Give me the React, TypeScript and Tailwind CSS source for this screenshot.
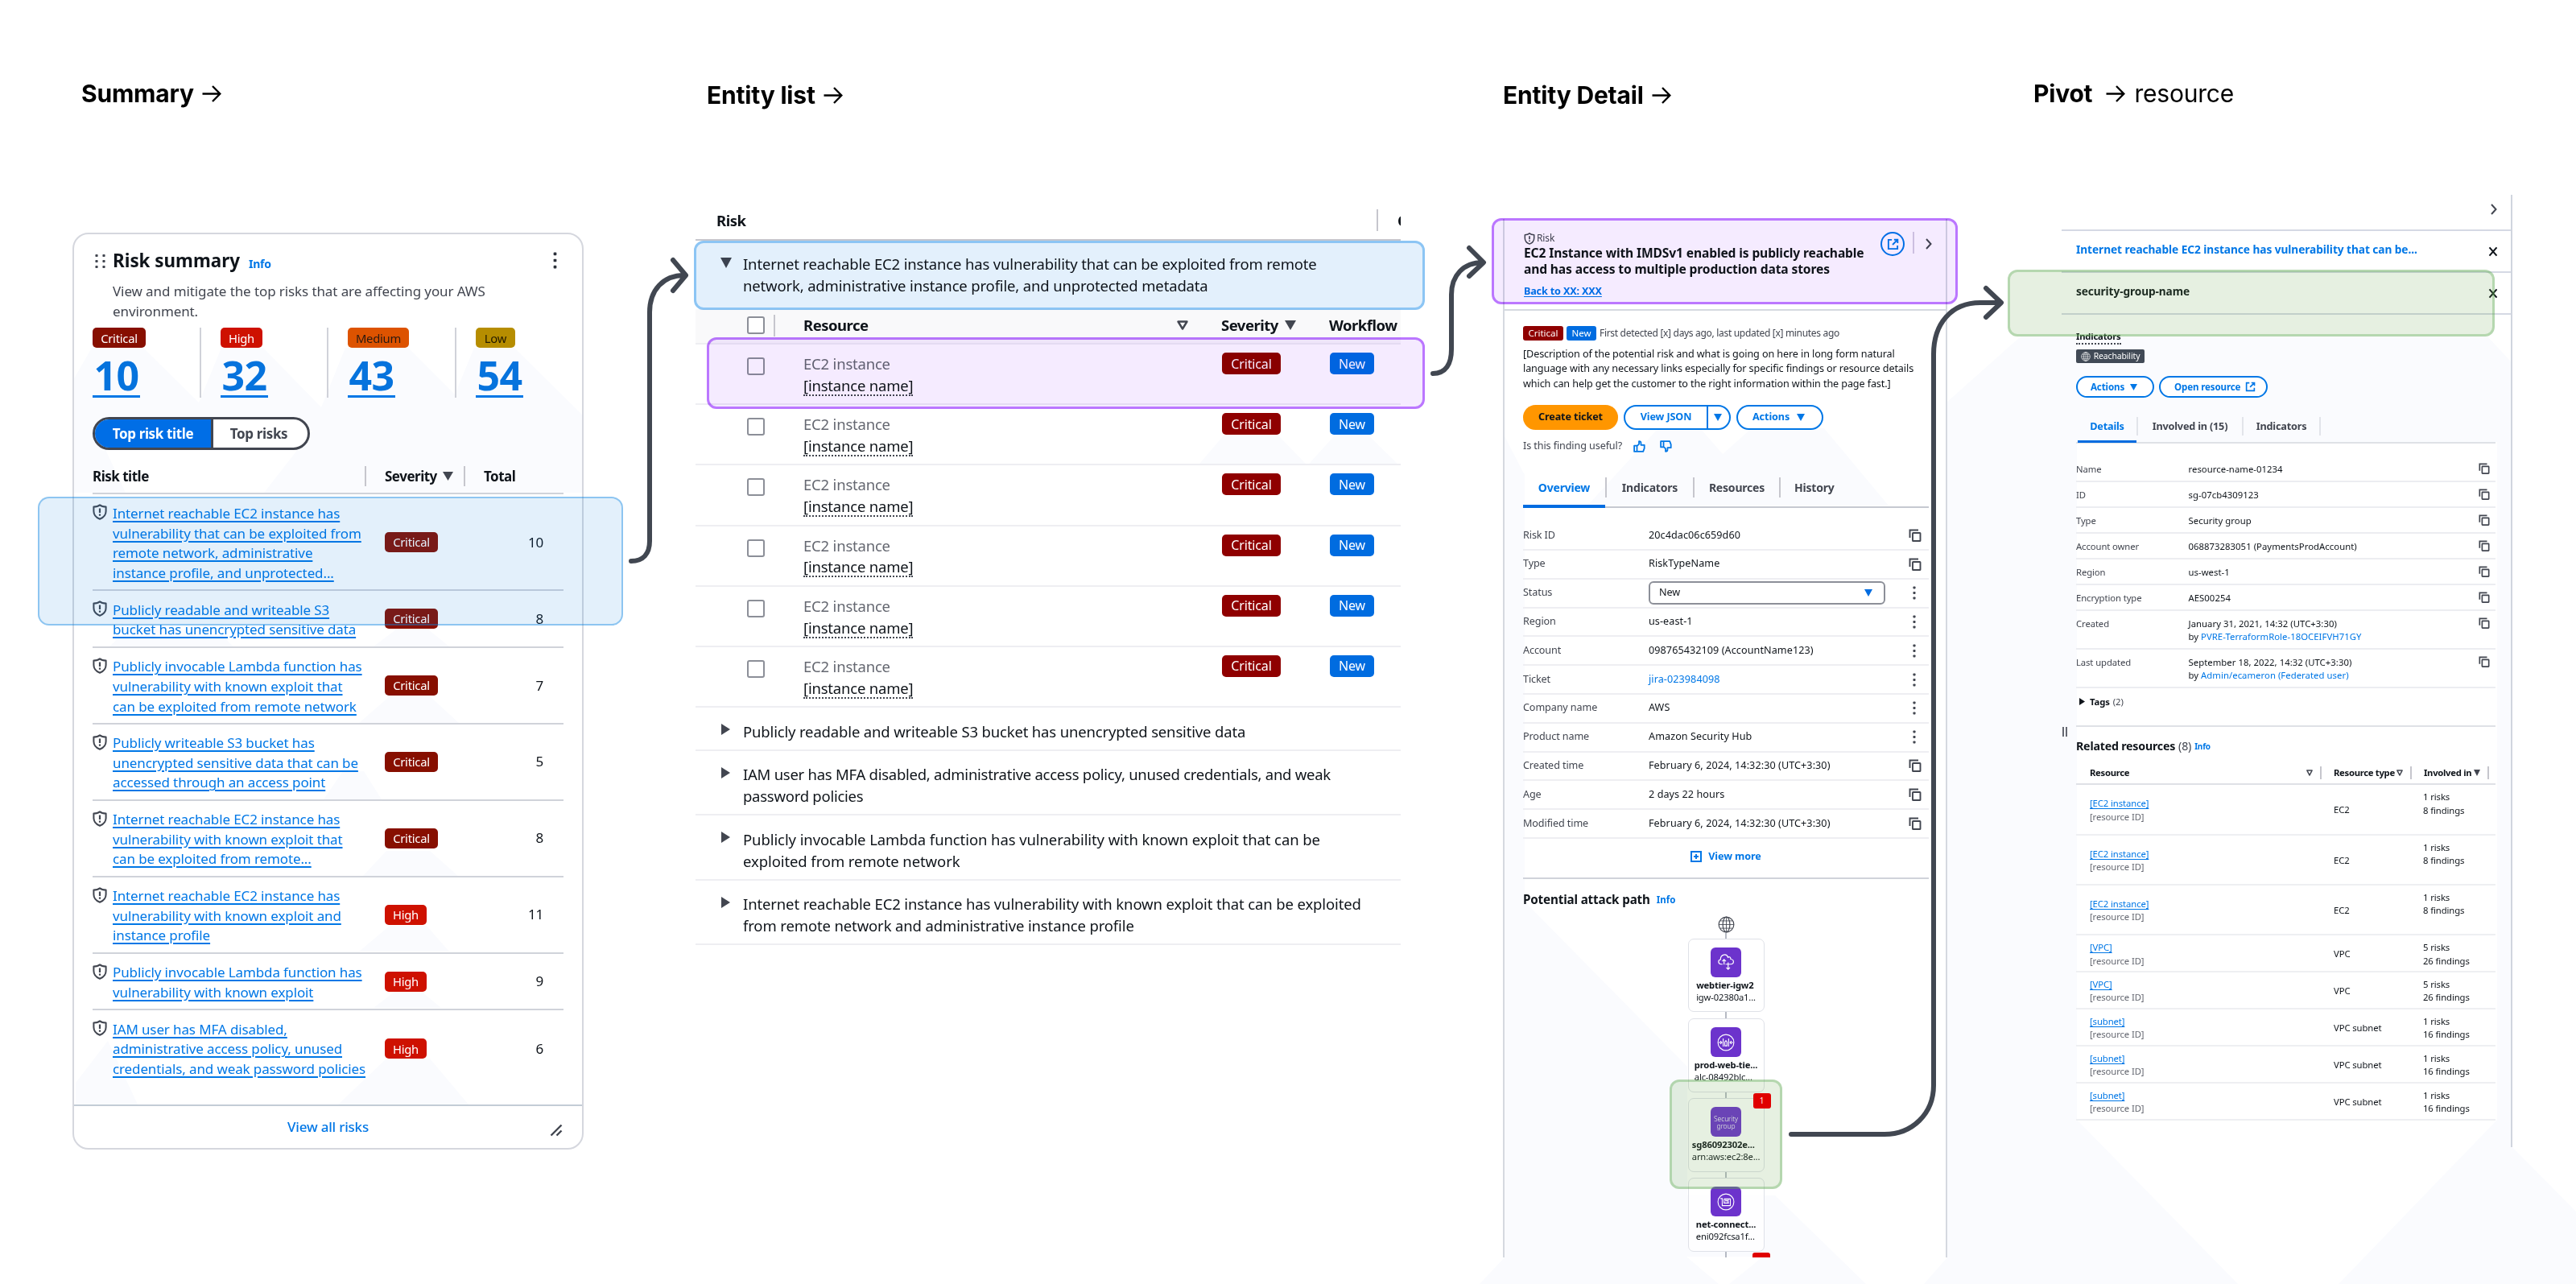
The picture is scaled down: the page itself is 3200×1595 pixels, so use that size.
import React, { Fragment, type ReactNode } from "react";

/* ---------- icons ---------- */

function Down({ className = "" }: { className?: string }) {
  return (
    <svg viewBox="0 0 12 10" preserveAspectRatio="none" className={className} fill="currentColor">
      <path d="M0 0h12L6 10z" />
    </svg>
  );
}

function DownOutline({ className = "" }: { className?: string }) {
  return (
    <svg viewBox="0 0 14 12" preserveAspectRatio="none" className={className} fill="none" stroke="currentColor" strokeWidth="2.4" strokeLinejoin="round">
      <path d="M1.5 1.5h11L7 10.5z" />
    </svg>
  );
}

function Right({ className = "" }: { className?: string }) {
  return (
    <svg viewBox="0 0 10 12" preserveAspectRatio="none" className={className} fill="currentColor">
      <path d="M0 0l10 6L0 12z" />
    </svg>
  );
}

function Shield({ className = "" }: { className?: string }) {
  return (
    <svg viewBox="0 0 18 20" className={className} fill="none" stroke="currentColor" strokeWidth="2">
      <path d="M9 1.2C7 3 4 3.6 1.4 3.6V9c0 4.8 3 8 7.6 9.8 4.6-1.8 7.6-5 7.6-9.800V3.600C14 3.600 11 3 9 1.200z" strokeLinejoin="round" />
      <path d="M9 5.500v5.500M9 12.500v2.200" strokeWidth="2.200" />
    </svg>
  );
}

function Copy({ className = "" }: { className?: string }) {
  return (
    <svg viewBox="0 0 16 16" className={className} fill="none" stroke="currentColor" strokeWidth="1.9">
      <path d="M1.500 11V1.500H12" />
      <rect x="5" y="5" width="9.500" height="10" rx=".6" />
    </svg>
  );
}

function External({ className = "" }: { className?: string }) {
  return (
    <svg viewBox="0 0 16 16" className={className} fill="none" stroke="currentColor" strokeWidth="2">
      <path d="M6.500 2H2v12h12V9.500M9.500 1.800h4.700v4.700M14 2L7.500 8.500" />
    </svg>
  );
}

function Thumb({ className = "" }: { className?: string }) {
  return (
    <svg viewBox="0 0 16 16" className={className} fill="none" stroke="currentColor" strokeWidth="1.9" strokeLinejoin="round">
      <path d="M1.200 7h3.600v7.800H1.200zM4.800 7.500L7.500 5V1.300c1.800 0 2.600 1 2.600 2.500V6.200h4.500v4.300l-1.600 4.300H4.800" />
    </svg>
  );
}

function Globe({ className = "" }: { className?: string }) {
  return (
    <svg viewBox="0 0 22 22" className={className} fill="none" stroke="currentColor" strokeWidth="1.200">
      <circle cx="11" cy="11" r="9.800" />
      <ellipse cx="11" cy="11" rx="4.600" ry="9.800" />
      <path d="M11 1.200v19.600M1.200 11h19.600M3 6.200h16M3 15.800h16" strokeWidth=".9" />
    </svg>
  );
}

function Chevron({ className = "" }: { className?: string }) {
  return (
    <svg viewBox="0 0 8 14" className={className} fill="none" stroke="currentColor" strokeWidth="2">
      <path d="M1 1l5.500 6L1 13" />
    </svg>
  );
}

function Cross({ className = "" }: { className?: string }) {
  return (
    <svg viewBox="0 0 12 14" preserveAspectRatio="none" className={className} fill="none" stroke="currentColor" strokeWidth="2">
      <path d="M1.500 1.500l9 11M10.500 1.500l-9 11" />
    </svg>
  );
}

function Dots({ className = "" }: { className?: string }) {
  return (
    <svg viewBox="0 0 4 18" className={className} fill="currentColor">
      <rect x=".4" y=".4" width="3.200" height="3.200" rx=".8" />
      <rect x=".4" y="7.400" width="3.200" height="3.200" rx=".8" />
      <rect x=".4" y="14.400" width="3.200" height="3.200" rx=".8" />
    </svg>
  );
}

/* ---------- shared ---------- */

function Title({ children, rest, gap, className = "" }: { children: ReactNode; rest?: string; gap: string; className?: string }) {
  return (
    <h2 className={`flex h-10 items-center font-['Inter',sans-serif] text-[30px] leading-10 font-bold tracking-[-0.2px] whitespace-nowrap text-black ${className}`}>
      {children}
      <svg viewBox="0 0 24 26" className={`h-[26px] w-6 ${gap}`} fill="none" stroke="currentColor" strokeWidth="2.400">
        <path d="M.5 13.500h21.500M13 4l9.300 9.500L13 23" />
      </svg>
      {rest && <span className="ml-[11px] font-normal">{rest}</span>}
    </h2>
  );
}

/* ---------- summary ---------- */

const severities = [
  { label: "Critical", count: 10, box: "w-[159px]", badge: "w-[66px] bg-[#870f00] text-white" },
  { label: "High", count: 32, box: "w-[158px]", badge: "w-[52px] bg-[#ce1100] text-white" },
  { label: "Medium", count: 43, box: "w-[159px]", badge: "w-[76px] bg-[#dd5300] text-[#2a1a10]" },
  { label: "Low", count: 54, box: "w-[80px]", badge: "w-[49px] bg-[#b68d00] text-[#221a00]" },
];

const risks: { lines: string[]; level: "Critical" | "High"; total: number; h: string }[] = [
  { lines: ["Internet reachable EC2 instance has", "vulnerability that can be exploited from", "remote network, administrative", "instance profile, and unprotected..."], level: "Critical", total: 10, h: "h-[119.7px]" },
  { lines: ["Publicly readable and writeable S3", "bucket has unencrypted sensitive data"], level: "Critical", total: 8, h: "h-[70.8px]" },
  { lines: ["Publicly invocable Lambda function has", "vulnerability with known exploit that", "can be exploited from remote network"], level: "Critical", total: 7, h: "h-[94.9px]" },
  { lines: ["Publicly writeable S3 bucket has", "unencrypted sensitive data that can be", "accessed through an access point"], level: "Critical", total: 5, h: "h-[94.8px]" },
  { lines: ["Internet reachable EC2 instance has", "vulnerability with known exploit that", "can be exploited from remote..."], level: "Critical", total: 8, h: "h-[95px]" },
  { lines: ["Internet reachable EC2 instance has", "vulnerability with known exploit and", "instance profile"], level: "High", total: 11, h: "h-[95.2px]" },
  { lines: ["Publicly invocable Lambda function has", "vulnerability with known exploit"], level: "High", total: 9, h: "h-[70.6px]" },
  { lines: ["IAM user has MFA disabled,", "administrative access policy, unused", "credentials, and weak password policies"], level: "High", total: 6, h: "h-[95px]" },
];

function Summary() {
  return (
    <section className="w-[864px] shrink-0 pt-[96px]">
      <Title className="ml-[101px]" gap="ml-[10px]">Summary</Title>
      <div className="mt-[153px] ml-[90px] flex h-[1139px] w-[635px] flex-col rounded-[20px] border-2 border-[#d5d7de] text-[17px] tracking-[-0.24px]">
        <div className="flex h-[43px] items-end pl-[26px]">
          <div className="mb-[-4px] flex items-center">
            <div className="flex gap-[5px] text-[#424650]">
              <Dots className="h-[19px] w-1" />
              <Dots className="h-[19px] w-1" />
            </div>
            <h3 className="ml-[9px] text-[22.400px] leading-7 font-bold tracking-normal text-[#0f141a]">Risk summary</h3>
            <span className="mt-[7px] ml-[11px] text-[14px] leading-5 font-bold text-[#0077e6]">Info</span>
          </div>
          <Dots className="mb-0 ml-auto mr-[31px] h-[21px] w-[5px] text-[#2b303a]" />
        </div>
        <p className="mt-[16px] ml-12 text-[17px] leading-[24.700px] tracking-[-0.1px] text-[#424650]">
          View and mitigate the top risks that are affecting your AWS
          <br />
          environment.
        </p>
        <div className="mt-[8px] ml-[23px] flex h-[87px]">
          {severities.map((s, i) => (
            <div key={s.label} className={`relative ${s.box}`}>
              <span className={`flex h-[25px] items-center justify-center rounded-[5px] text-[14.800px] ${s.badge}`}>{s.label}</span>
              <a className="mt-[9px] block h-[53px] w-[59px] border-b-[3px] border-[#0077e6] text-center text-[50px] leading-[50px] font-bold tracking-[-0.5px] text-[#0673dd]">{s.count}</a>
              {i < 3 && <i className="absolute top-0 right-6 h-[87px] w-0.5 bg-[#d0d2d9]" />}
            </div>
          ))}
        </div>
        <div className="mt-6 ml-[23px] flex h-[41px] w-[270px] overflow-hidden rounded-[21px] border-[3px] border-[#424650] bg-white font-bold">
          <span className="flex w-[147px] items-center justify-center border-r-[3px] border-[#424650] bg-[#006ee6] text-white tracking-[-0.35px]">Top risk title</span>
          <span className="flex flex-1 items-center justify-center pr-1 text-[#424650] tracking-[-0.35px]">Top risks</span>
        </div>
        <div className="mt-[12px] ml-[23px] flex h-[43px] w-[585px] items-center border-b-2 border-[#d0d3da] font-bold tracking-[-0.500px] text-[#0f141a]">
          <span className="w-[338px]">Risk title</span>
          <i className="h-[25px] w-0.5 bg-[#c6c6cd]" />
          <span className="ml-[23px] w-[72px]">Severity</span>
          <Down className="h-[11px] w-[13px] text-[#424650]" />
          <i className="ml-[13px] h-[25px] w-0.5 bg-[#c6c6cd]" />
          <span className="ml-[23px]">Total</span>
        </div>
        <ul className="ml-[23px] w-[585px]">
          {risks.map((r, i) => (
            <li key={i} className={`flex border-[#d0d3da] ${r.h} ${i < 7 ? "border-b-2" : ""}`}>
              <Shield className="mt-3 h-5 w-[18px] text-[#424650]" />
              <div className="mt-[11.500px] ml-[7px] w-[338px] leading-[24.600px] tracking-[-0.12px] whitespace-nowrap text-[#0077e6] underline decoration-2 underline-offset-[3px]">
                {r.lines.map((l, k) => (
                  <Fragment key={k}>
                    {l}
                    <br />
                  </Fragment>
                ))}
              </div>
              <div className="flex w-[197px] items-center justify-between">
                <span className={`flex h-[25px] items-center justify-center rounded-[5px] text-[14.800px] text-white ${r.level === "Critical" ? "w-[66px] bg-[#870f00]" : "w-[52px] bg-[#ce1100]"}`}>{r.level}</span>
                <span className="text-[#0f141a]">{r.total}</span>
              </div>
            </li>
          ))}
        </ul>
        <div className="relative mt-auto flex h-[54px] items-center justify-center border-t-2 border-[#c3ccd6] text-[17px] font-medium tracking-[-0.2px] text-[#0077e6]">
          View all risks
          <svg viewBox="0 0 16 16" className="absolute right-6 bottom-[14px] h-4 w-4 text-[#424650]" fill="none" stroke="currentColor" strokeWidth="2.400">
            <path d="M1.500 14.500l13-13M8.500 14.500l6-6" />
          </svg>
        </div>
      </div>
    </section>
  );
}

/* ---------- entity list ---------- */

const groups: { h: string; lines: string[]; track: string }[] = [
  { h: "h-[53.700px]", track: "tracking-[-0.16px]", lines: ["Publicly readable and writeable S3 bucket has unencrypted sensitive data"] },
  { h: "h-[80.600px]", track: "tracking-[-0.26px]", lines: ["IAM user has MFA disabled, administrative access policy, unused credentials, and weak", "password policies"] },
  { h: "h-[80.400px]", track: "tracking-[-0.09px]", lines: ["Publicly invocable Lambda function has vulnerability with known exploit that can be", "exploited from remote network"] },
  { h: "h-[80.600px]", track: "tracking-[-0.13px]", lines: ["Internet reachable EC2 instance has vulnerability with known exploit that can be exploited", "from remote network and administrative instance profile"] },
];

function Box({ className = "" }: { className?: string }) {
  return <span className={`block h-[22px] w-[22px] rounded-[3px] border-[2.500px] border-[#8c8f98] bg-white ${className}`} />;
}

function EntityList() {
  return (
    <section className="w-[1003px] shrink-0 pt-[98px]">
      <Title className="ml-[14px]" gap="ml-[10px]">Entity list</Title>
      <div className="mt-[112px] w-[876px] overflow-hidden text-[18.500px] tracking-[-0.16px] text-[#0f141a]">
        <div className="flex h-[49px] items-center border-b-2 border-[#c6c6cd] pl-[26px] font-bold tracking-[-0.5px]">
          <span>Risk</span>
          <i className="ml-auto h-[27px] w-0.5 bg-[#c6c6cd]" />
          <span className="ml-[24px] w-[4px] overflow-hidden">C</span>
        </div>
        <div className="flex h-[85px] pt-[15px]">
          <Down className="mt-[6px] ml-[31px] h-[13px] w-[14px] text-[#424650]" />
          <p className="ml-[14px] leading-[27.400px] whitespace-nowrap">
            Internet reachable EC2 instance has vulnerability that can be exploited from remote
            <br />
            network, administrative instance profile, and unprotected metadata
          </p>
        </div>
        <div className="flex h-[44px] items-center border-b-2 border-[#eeeef2] bg-[#f9f9fa] pb-[2px] font-bold tracking-[-0.5px]">
          <Box className="ml-[64px]" />
          <i className="ml-[11px] h-[27px] w-0.5 bg-[#c6c6cd]" />
          <span className="ml-[35px] w-[464px]">Resource</span>
          <DownOutline className="h-3 w-[14px] text-[#424650]" />
          <span className="ml-[41px] w-[79px]">Severity</span>
          <Down className="h-3 w-[14px] text-[#424650]" />
          <span className="ml-[41px]">Workflow</span>
        </div>
        {[0, 1, 2, 3, 4, 5].map((i) => (
          <div key={i} className="flex h-[75.200px] border-b-2 border-[#eeeef2]">
            <Box className="mt-[16px] ml-[64px]" />
            <div className="mt-[11px] ml-12 w-[520px] leading-[26.800px] tracking-[-0.2px]">
              <div className="text-[#656871]">EC2 instance</div>
              <span className="inline-block h-[26px] border-b-2 border-dotted border-[#424650]">[instance name]</span>
            </div>
            <span className="mt-[10px] flex h-[27px] w-[73px] items-center justify-center rounded-[5px] bg-[#8f0000] text-[16px] text-white">Critical</span>
            <span className="mt-[10px] ml-[61px] flex h-[27px] w-[55px] items-center justify-center rounded-[5px] bg-[#006ce0] text-[16px] text-white">New</span>
          </div>
        ))}
        {groups.map((g) => (
          <div key={g.lines[0]} className={`flex border-b-2 border-[#eeeef2] ${g.h}`}>
            <Right className="mt-[20px] ml-8 h-[14px] w-[11px] text-[#424650]" />
            <p className={`mt-[15.500px] ml-4 leading-[27px] whitespace-nowrap ${g.track}`}>
              {g.lines.map((l, k) => (
                <Fragment key={k}>
                  {l}
                  <br />
                </Fragment>
              ))}
            </p>
          </div>
        ))}
      </div>
    </section>
  );
}

/* ---------- entity detail ---------- */

const detailRows: [string, string, "copy" | "dots"][] = [
  ["Risk ID", "20c4dac06c659d60", "copy"],
  ["Type", "RiskTypeName", "copy"],
  ["Status", "New", "dots"],
  ["Region", "us-east-1", "dots"],
  ["Account", "098765432109 (AccountName123)", "dots"],
  ["Ticket", "jira-023984098", "dots"],
  ["Company name", "AWS", "dots"],
  ["Product name", "Amazon Security Hub", "dots"],
  ["Created time", "February 6, 2024, 14:32:30 (UTC+3:30)", "copy"],
  ["Age", "2 days 22 hours", "copy"],
  ["Modified time", "February 6, 2024, 14:32:30 (UTC+3:30)", "copy"],
];

const nodes: { name: string; id: string; icon: ReactNode }[] = [
  {
    name: "webtier-igw2",
    id: "igw-02380a1...",
    icon: (
      <svg viewBox="0 0 24 24" className="h-[22px] w-[22px]" fill="none" stroke="white" strokeWidth="1.300">
        <path d="M7.500 15H5.500C.8 14.500 1.200 9 4.700 8.700 4.500 1.500 13 0 14.800 5.700c2-1.600 3.800 0 3.700 2.500 5 .6 5 6.300 0 6.800h-2M9.500 15.500V9M7 11l2.500-2.500L12 11M15 12.500v9.500M12.500 19.500l2.500 2.500 2.500-2.500M11.500 15h7" />
      </svg>
    ),
  },
  {
    name: "prod-web-tie...",
    id: "alc-08492blc...",
    icon: (
      <svg viewBox="0 0 24 24" className="h-[22px] w-[22px]" fill="none" stroke="white" strokeWidth="1.200">
        <circle cx="12" cy="12" r="10.800" />
        <path d="M2 12h4M18 12h4M4.500 10l2 2-2 2M19.500 10l-2 2 2 2M8.300 6.500v11M15.700 6.500v11M10.500 16.500v-5l1.500-2 1.500 2v5z" />
      </svg>
    ),
  },
  {
    name: "sg86092302e...",
    id: "arn:aws:ec2:8e...",
    icon: <span className="text-center text-[8.500px] leading-[9px] font-light tracking-[-0.1px] text-white">Security<br />group</span>,
  },
  {
    name: "net-connect...",
    id: "eni092fcsa1f...",
    icon: (
      <svg viewBox="0 0 24 24" className="h-[22px] w-[22px]" fill="none" stroke="white" strokeWidth="1.200">
        <circle cx="12" cy="12" r="10.800" />
        <path d="M4.500 7.500h2.500V17h11V8h-8.500M9.500 8v5.500h6.500M11 10.500h4M12 8v3M15 8v5" />
      </svg>
    ),
  },
];

function Detail() {
  return (
    <section className="w-[662px] shrink-0 pt-[98px]">
      <Title gap="ml-[10px]">Entity Detail</Title>
      <div className="mt-[134px] h-[1290px] w-[552px] overflow-hidden border-x-2 border-[#d5d9e0] text-[12.600px] tracking-[-0.1px] text-[#0f141a]">
        <header className="flex h-[114px] border-b-2 border-[#d5d9e0] pt-[16px] pl-6">
          <div className="w-[443px]">
            <div className="flex h-4 items-center gap-0.5 text-[12px] text-[#424650]">
              <Shield className="h-[15px] w-[14px]" />
              <span>Risk</span>
            </div>
            <h3 className="text-[15.600px] leading-[20.300px] font-bold tracking-[-0.13px] whitespace-nowrap">
              EC2 Instance with IMDSv1 enabled is publicly reachable
              <br />
              and has access to multiple production data stores
            </h3>
            <a className="mt-[8px] block text-[12.600px] leading-[18px] font-bold tracking-[-0.15px] text-[#0077e6] underline underline-offset-2">Back to XX: XXX</a>
          </div>
          <span className="flex h-[30px] w-[30px] items-center justify-center rounded-full border-2 border-[#0077e6] text-[#0077e6]">
            <External className="h-[15px] w-[15px]" />
          </span>
          <i className="ml-[10px] h-[27px] w-0.5 bg-[#d5cfe0]" />
          <Chevron className="mt-2 ml-[14px] h-[14px] w-2 text-[#424650]" />
        </header>
        <div className="pl-[23px]">
          <div className="mt-[19px] flex h-[18px] items-center text-[12px] tracking-[-0.31px] text-[#424650]">
            <span className="flex h-[18px] w-[50px] items-center justify-center rounded-[3px] bg-[#8f0000] tracking-normal text-[11.500px] text-white">Critical</span>
            <span className="ml-1 flex h-[18px] w-[37px] items-center justify-center rounded-[3px] bg-[#006ce0] tracking-normal text-[11.500px] text-white">New</span>
            <span className="ml-1">First detected [x] days ago, last updated [x] minutes ago</span>
          </div>
          <p className="mt-[8px] text-[12.600px] leading-[18.400px] whitespace-nowrap">
            [Description of the potential risk and what is going on here in long form natural
            <br />
            language with any necessary links especially for specific findings or resource details
            <br />
            which can help get the customer to the right information within the page fast.]
          </p>
          <div className="mt-[17px] flex h-[31px] gap-[7px] font-bold">
            <span className="flex w-[118px] items-center justify-center rounded-full bg-[#ff9600]">Create ticket</span>
            <span className="flex w-[133px] rounded-full border-2 border-[#0077e6] bg-white text-[#0077e6]">
              <span className="flex w-[103px] items-center justify-center border-r-2 border-[#0077e6]">View JSON</span>
              <Down className="mt-[9px] ml-[7px] h-[9px] w-[10px]" />
            </span>
            <span className="flex w-[108px] items-center rounded-full border-2 border-[#0077e6] bg-white pl-[18px] text-[#0077e6]">
              Actions
              <Down className="ml-[9px] h-[9px] w-[10px]" />
            </span>
          </div>
          <div className="mt-[10px] flex h-5 items-center text-[#424650]">
            <span className="w-[137px]">Is this finding useful?</span>
            <Thumb className="h-[15px] w-[15px] text-[#0077e6]" />
            <Thumb className="ml-[18px] h-[15px] w-[15px] -scale-y-100 text-[#0077e6]" />
          </div>
          <nav className="mt-[25px] flex h-[42px] w-[504px] items-start border-b-2 border-[#c6c9d1] text-[14px] leading-[33px] font-bold tracking-[-0.2px] text-[#424650]">
            <span className="flex h-[42px] w-[102px] justify-center border-b-4 border-[#006ce0] text-[#0077e6]">Overview</span>
            <i className="mt-[4px] h-[25px] w-0.5 bg-[#c6c6cd]" />
            <span className="w-[107px] text-center">Indicators</span>
            <i className="mt-[4px] h-[25px] w-0.5 bg-[#c6c6cd]" />
            <span className="w-[105px] text-center">Resources</span>
            <i className="mt-[4px] h-[25px] w-0.5 bg-[#c6c6cd]" />
            <span className="ml-[17px]">History</span>
          </nav>
          <dl className="mt-[17px] w-[504px]">
            {detailRows.map(([k, v, action]) => (
              <div key={k} className="flex h-[35.800px] items-center border-b-2 border-[#eeeef2]">
                <dt className="w-[156px] text-[#424650]">{k}</dt>
                {k === "Status" ? (
                  <dd className="flex h-[29px] w-[294px] items-center justify-between rounded-md border-2 border-[#8c8f98] bg-white pr-[14px] pl-[11px]">
                    New
                    <Down className="h-[9px] w-[10px] text-[#006ce0]" />
                  </dd>
                ) : (
                  <dd className={`w-[294px] tracking-[0.08px] whitespace-nowrap ${k === "Ticket" ? "text-[#0077e6]" : ""}`}>{v}</dd>
                )}
                {action === "copy" ? <Copy className="ml-[29px] h-4 w-4 text-[#424650]" /> : <Dots className="ml-[34px] h-[17px] w-1 text-[#424650]" />}
              </div>
            ))}
          </dl>
          <div className="flex h-[50px] w-[504px] items-center justify-center border-b-2 border-[#d0d3da] pb-[4px] font-bold text-[#0077e6]">
            <svg viewBox="0 0 14 14" className="mr-2 h-[14px] w-[14px]" fill="none" stroke="currentColor" strokeWidth="2">
              <path d="M1 1h12v12H1zM7 4v6M4 7h6" />
            </svg>
            View more
          </div>
          <h4 className="mt-[12px] flex items-center text-[15.200px] leading-6 font-bold tracking-[-0.15px]">
            Potential attack path <span className="mt-0.5 ml-2 text-[11.500px] tracking-normal text-[#0077e6]">Info</span>
          </h4>
          <div className="mt-[8px] flex w-[504px] flex-col items-center text-[#424650]">
            <Globe className="h-[21px] w-[21px]" />
            <i className="h-[7px] w-0.5 bg-[#b6bac4]" />
            {nodes.map((n, i) => (
              <Fragment key={n.name}>
                <div className="relative flex h-[91.500px] w-[95px] shrink-0 flex-col items-center rounded-[7px] border-[1.500px] border-[#dfe1e8] bg-white/70 pt-[10px]">
                  <span className="flex h-[37px] w-[38px] items-center justify-center rounded-md bg-[#6c33cc]">{n.icon}</span>
                  <div className="mt-[3px] text-[11.200px] leading-[14.700px] tracking-[-0.150px] whitespace-nowrap text-[#0f141a]">
                    <b className="block">{n.name}</b>
                    {n.id}
                  </div>
                  {i === 2 && <em className="absolute -top-[7px] -right-[9px] z-10 flex h-[19px] w-[22px] items-center justify-center rounded-[3px] bg-[#e00000] text-[10px] text-white/90 not-italic">1</em>}
                </div>
                <i className="h-[7.600px] w-0.5 shrink-0 bg-[#b6bac4]" />
              </Fragment>
            ))}
          </div>
          <div className="-mt-[6px] ml-[285px] h-[19px] w-[22px] rounded-[3px] bg-[#e00000]" />
        </div>
      </div>
    </section>
  );
}

/* ---------- pivot to resource ---------- */

const props: { k: string; v: string; link?: string; h: string }[] = [
  { k: "Name", v: "resource-name-01234", h: "h-[32px]" },
  { k: "ID", v: "sg-07cb4309123", h: "h-[32px]" },
  { k: "Type", v: "Security group", h: "h-[32px]" },
  { k: "Account owner", v: "068873283051 (PaymentsProdAccount)", h: "h-[32px]" },
  { k: "Region", v: "us-west-1", h: "h-[32px]" },
  { k: "Encryption type", v: "AES00254", h: "h-[32px]" },
  { k: "Created", v: "January 31, 2021, 14:32 (UTC+3:30)", link: "PVRE-TerraformRole-18OCEIFVH71GY", h: "h-[48.300px]" },
  { k: "Last updated", v: "September 18, 2022, 14:32 (UTC+3:30)", link: "Admin/ecameron (Federated user)", h: "h-[48.200px]" },
];

const related: [string, string, number, number][] = [
  ["[EC2 instance]", "EC2", 1, 8],
  ["[EC2 instance]", "EC2", 1, 8],
  ["[EC2 instance]", "EC2", 1, 8],
  ["[VPC]", "VPC", 5, 26],
  ["[VPC]", "VPC", 5, 26],
  ["[subnet]", "VPC subnet", 1, 16],
  ["[subnet]", "VPC subnet", 1, 16],
  ["[subnet]", "VPC subnet", 1, 16],
];

function Pivot() {
  return (
    <section className="w-[671px] shrink-0 pt-[96px]">
      <Title className="-ml-[3px]" gap="ml-[17px]" rest="resource">Pivot</Title>
      <div className="relative mt-[106px] ml-[32px] h-[1183px] w-[560px] border-r-2 border-[#d0d5de] text-[11.300px] tracking-[-0.1px] text-[#0f141a]">
        <div className="flex h-[45px] items-center justify-end border-b-2 border-[#d5d9e4] pr-[17px] pb-[7px]">
          <Chevron className="h-[14px] w-2 text-[#424650]" />
        </div>
        <div className="flex h-[52px] items-center border-b-2 border-[#d5d9e4] pr-[16px] pl-[18px]">
          <span className="pb-1 text-[13.700px] font-bold tracking-[-0.060px] whitespace-nowrap text-[#0077e6]">Internet reachable EC2 instance has vulnerability that can be...</span>
          <Cross className="ml-auto h-[13px] w-3 text-[#0f141a]" />
        </div>
        <div className="flex h-[52px] items-center border-b-2 border-[#d5d9e4] pr-[16px] pl-[18px]">
          <span className="pb-[3px] text-[13.700px] font-bold">security-group-name</span>
          <Cross className="ml-auto h-[13px] w-3 text-[#0f141a]" />
        </div>
        <i className="absolute top-[661px] left-[1px] h-3 w-[6px] border-x-2 border-[#656871]" />
        <div className="w-[539px] pl-[18px]">
          <div className="mt-[19px] h-[18px]">
            <span className="inline-block h-[18px] border-b-2 border-dotted border-[#424650] text-[11.300px] leading-4 font-bold tracking-[-0.2px]">Indicators</span>
          </div>
          <div className="mt-[6px] flex h-[17px] w-[85px] items-center justify-center gap-1 rounded-[2px] bg-[#414a56] text-[10.400px] text-white">
            <Globe className="h-3 w-3" />
            Reachability
          </div>
          <div className="mt-4 flex h-[27px] gap-[6px] text-[11.600px] font-bold tracking-[-0.15px] text-[#0077e6]">
            <span className="flex w-[97px] items-center rounded-full border-2 border-[#0077e6] bg-white pl-4">
              Actions <Down className="ml-[7px] h-[8px] w-[9px]" />
            </span>
            <span className="flex w-[135px] items-center rounded-full border-2 border-[#0077e6] bg-white pl-[17px]">
              Open resource <External className="ml-[6px] h-[13px] w-[13px]" />
            </span>
          </div>
          <nav className="mt-[21px] flex h-[36px] items-start border-b-2 border-[#dfe1e6] text-[12.700px] leading-[29px] font-bold tracking-[-0.2px] whitespace-nowrap text-[#424650]">
            <span className="ml-0.5 flex h-[35px] w-[73px] justify-center border-b-[3px] border-[#006ce0] text-[#0077e6]">Details</span>
            <i className="mt-[3px] h-[23px] w-0.5 bg-[#e2e4ea]" />
            <span className="w-[129px] text-center">Involved in (15)</span>
            <i className="mt-[3px] h-[23px] w-0.5 bg-[#e2e4ea]" />
            <span className="w-[94px] text-center">Indicators</span>
            <i className="mt-[3px] h-[23px] w-0.5 bg-[#e2e4ea]" />
          </nav>
          <dl className="mt-4">
            {props.map((p) => (
              <div key={p.k} className={`flex border-b-2 border-[#ecedf1] pt-[8px] leading-4 ${p.h}`}>
                <dt className="w-[139.500px] text-[#424650]">{p.k}</dt>
                <dd className="w-[360px] tracking-[0.05px]">
                  {p.v}
                  {p.link && (
                    <div>
                      by <a className="text-[#0077e6]">{p.link}</a>
                    </div>
                  )}
                </dd>
                <Copy className="h-[14px] w-[14px] text-[#424650]" />
              </div>
            ))}
          </dl>
          <div className="flex h-[48px] items-center border-b-2 border-[#dfe1e6] pb-[13px] pl-1">
            <Right className="h-[9px] w-[7px]" />
            <b className="mr-1 ml-[6px]">Tags</b> <span className="text-[#424650]">(2)</span>
          </div>
          <h4 className="mt-[11px] flex h-6 items-center text-[14.200px] font-bold tracking-[-0.2px]">
            Related resources <span className="ml-1 font-normal text-[#424650]">(8)</span>
            <span className="mt-0.5 ml-1 text-[10px] text-[#0077e6]">Info</span>
          </h4>
          <div className="mt-[8px] flex h-[29px] items-center border-b-2 border-[#dfe1e6] pl-[17px] text-[11.300px] font-bold tracking-[-0.3px] whitespace-nowrap">
            <span className="w-[269px]">Resource</span>
            <DownOutline className="h-[8px] w-2 text-[#424650]" />
            <i className="ml-[9px] h-4 w-0.5 bg-[#c6c6cd]" />
            <span className="ml-[15px] w-[78px]">Resource type</span>
            <DownOutline className="h-[8px] w-2 text-[#424650]" />
            <i className="ml-[9px] h-4 w-0.5 bg-[#c6c6cd]" />
            <span className="ml-[15px] w-[62px]">Involved in</span>
            <Down className="h-[8px] w-2 text-[#424650]" />
            <i className="ml-[9px] h-4 w-0.5 bg-[#c6c6cd]" />
          </div>
          {related.map(([name, type, r, f], i) => (
            <div key={i} className={`flex border-b-2 border-[#eeeff2] pl-[17px] leading-[16.500px] ${i < 3 ? "h-[62.200px] pt-[7px]" : "h-[45.900px] pt-[7px]"}`}>
              <div className={`w-[303px] text-[#656871] ${i < 3 ? "pt-2" : ""}`}>
                <a className="text-[#0077e6] underline underline-offset-2">{name}</a>
                <br />
                [resource ID]
              </div>
              <div className={`w-[111px] ${i < 3 ? "pt-4" : "pt-2"}`}>{type}</div>
              <div>
                {r} risks
                <br />
                {f} findings
              </div>
            </div>
          ))}
        </div>
      </div>
    </section>
  );
}

/* ---------- page ---------- */

function Backdrop() {
  return (
    <svg viewBox="0 0 3200 1595" className="absolute inset-0 h-[1595px] w-[3200px] text-[#fafbfe]" fill="currentColor">
      <path d="M92 470l22-38h64l69 68 28-68h52l72 74 30-74h78l58 58 24-58h50l84 83v97H328l60-77H120l36 77H92z" />
      <path d="M492 782h40l26 21h-94zM136 803l22-21h110l22 21zM484 865h50l36 33H446zM402 993l24-35 26 0 22 35zM480 1057h54l36 32H450zM484 1150h46l28 32H446zM490 1232h34l24 20h-84zM480 1315h54l48 57H420zM94 1345l40-52 37 79H94z" />
      <path d="M1868 540l26 50v530l202 205v160h109l113 110h-170l42-34h-95l40 34h-297l30-32z" />
      <path d="M1972 628l88-96h52l28 32 36-32h90l80 96z" />
      <path d="M1520 541h68l34 35h-132zM1658 541h42l36 35h-110z" />
      <path d="M2510 418h580l30 32v974l80 81v90h-295l197-204V549h-522v842l200 204h-390l28-32V500z" />
    </svg>
  );
}

function Connectors() {
  return (
    <svg viewBox="0 0 3200 1595" className="pointer-events-none absolute inset-0 h-[1595px] w-[3200px] text-[#414751]" fill="none" stroke="currentColor" strokeWidth="6" strokeLinecap="round" strokeLinejoin="round">
      <path d="M784 697C799 697 807 688 807 672V388C807 360 824 342 850 342M836 323L852 342L836 361" />
      <path d="M1780 464C1796 464 1803 452 1803 434V366C1803 342 1818 326 1842 326M1825 308L1843 326L1825 343" />
      <path d="M2225 1409H2341C2375 1409 2402 1384 2402 1348V440C2402 402 2424 376 2460 376H2485M2467 358L2486 376L2467 394" />
    </svg>
  );
}

export default function App() {
  return (
    <main className="relative flex h-[1595px] w-[3200px] overflow-hidden bg-white font-['Noto_Sans',sans-serif]">
      <Backdrop />
      <div className="relative flex">
        <Summary />
        <EntityList />
        <Detail />
        <Pivot />
      </div>
      <div className="absolute top-[617px] left-[47px] h-[160px] w-[727px] rounded-[14px] border-[2.500px] border-[#0a84e0]/40 bg-[#0073d7]/11" />
      <div className="absolute top-[299px] left-[862px] h-[86px] w-[908px] rounded-xl border-[3px] border-[#8cc5f4] bg-[#e3f0fc] mix-blend-multiply" />
      <div className="absolute top-[419px] left-[878px] h-[89px] w-[892px] rounded-xl border-[3px] border-[#bb77ff] bg-[#f5ebff] mix-blend-multiply" />
      <div className="absolute top-[271px] left-[1853px] h-[107px] w-[579px] rounded-xl border-[3px] border-[#bb77ff] bg-[#f5ebff] mix-blend-multiply" />
      <div className="absolute top-[1341px] left-[2074px] h-[136px] w-[140px] rounded-xl border-[3px] border-[#5aaa50]/35 bg-[#64a046]/16" />
      <div className="absolute top-[335px] left-[2494px] h-[83px] w-[605px] rounded-xl border-[3px] border-[#5aaa50]/35 bg-[#64a046]/16" />
      <Connectors />
    </main>
  );
}
